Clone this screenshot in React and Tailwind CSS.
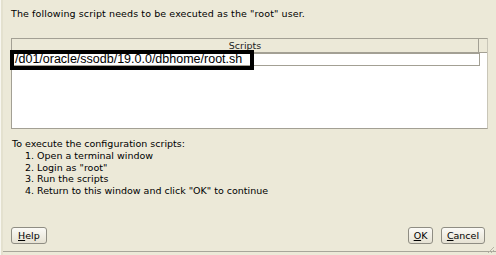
export default function App() {
  const dv = { fontFamily: '"DejaVu Sans", Verdana, sans-serif' };
  return (
    <div className="w-[496px] h-[255px] bg-[#ECE9D8] relative overflow-hidden text-black" style={dv}>
      <div className="absolute left-0 top-0 bottom-0 w-[3px] border-l border-[#f8f7f0] bg-[#e4e1cf]" />
      <div className="flex flex-col h-[252px] border-b border-[#a8a69a]">
        <div className="pl-[11px] pt-[8px] text-[9.5px] leading-[12px] tracking-[0.1px]">
          The following script needs to be executed as the "root" user.
        </div>
        <div className="ml-[11px] mt-[18px] w-[477px] h-[91px] border border-[#a3a094] border-r-[#c9c6b8] bg-white flex flex-col">
          <div className="flex h-[14px] bg-[#ECE9D8] border-b border-[#a3a094]">
            <div className="w-[467px] border-r border-[#a3a094] text-center text-[9.5px] leading-[13px] text-[#222]">Scripts</div>
            <div className="flex-1" />
          </div>
          <div className="relative w-[468px] h-[13px] border border-[#a3a094] bg-white">
            <div className="absolute left-[-3px] top-[-4px] w-[244px] h-[20px] border-[4px] border-black" />
            <div className="absolute left-[2px] top-[-2px] text-[12.5px] leading-[15px]" style={{ fontFamily: '"Liberation Sans", Arial, sans-serif' }}>
              /d01/oracle/ssodb/19.0.0/dbhome/root.sh
            </div>
          </div>
        </div>
        <div className="pl-[12px] pt-[9px] text-[9.5px] leading-[11.8px]">
          <div>To execute the configuration scripts:</div>
          <div className="pl-[13px]">
            <div>1. Open a terminal window</div>
            <div>2. Login as "root"</div>
            <div>3. Run the scripts</div>
            <div>4. Return to this window and click "OK" to continue</div>
          </div>
        </div>
        <div className="flex-1" />
        <div className="flex items-center px-[11px] pb-[7px]">
          <button className="h-[17px] px-[6px] text-[9.5px] leading-[15px] border border-[#8f8d83] rounded-[3px] bg-gradient-to-b from-[#fbfaf6] to-[#e6e2d3]">
            <span className="underline">H</span>elp
          </button>
          <div className="flex-1" />
          <button className="h-[17px] w-[25px] text-[9.5px] leading-[15px] border border-[#8f8d83] rounded-[3px] bg-gradient-to-b from-[#fbfaf6] to-[#e6e2d3]">
            <span className="underline">O</span>K
          </button>
          <button className="ml-[8px] h-[17px] w-[44px] text-[9.5px] leading-[15px] border border-[#8f8d83] rounded-[3px] bg-gradient-to-b from-[#fbfaf6] to-[#e6e2d3]">
            <span className="underline">C</span>ancel
          </button>
        </div>
      </div>
      <svg className="absolute right-[1px] bottom-[1px]" width="10" height="10" viewBox="0 0 10 10">
        <path d="M9 3 L3 9 M9 6 L6 9" stroke="#b5b2a5" strokeWidth="1" />
      </svg>
    </div>
  );
}
